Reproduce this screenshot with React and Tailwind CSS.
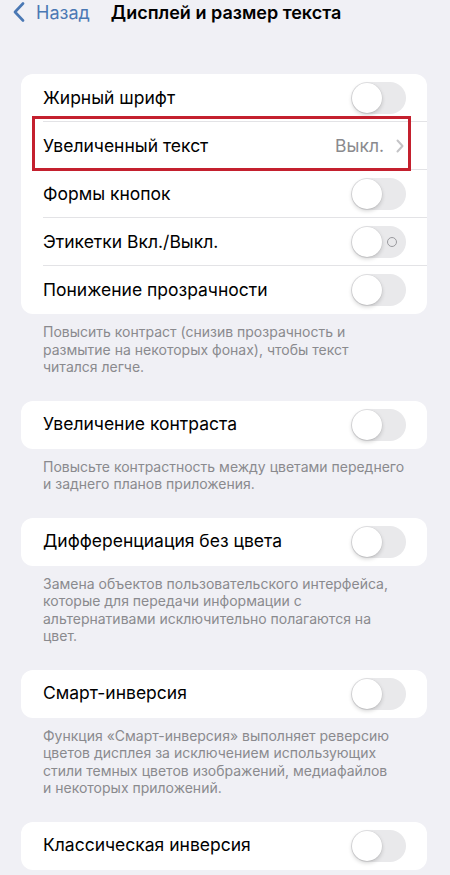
import React from "react";

function Toggle({ labels }) {
  return (
    <div className="relative w-[55px] h-[32px] rounded-full bg-[#e9e9eb] shrink-0">
      <div className="absolute left-[1px] top-[1px] w-[30px] h-[30px] rounded-full bg-white shadow-[0_2px_4px_rgba(0,0,0,0.18),0_0_0_0.5px_rgba(0,0,0,0.06)]" />
      {labels && (
        <div className="absolute right-[9px] top-[11px] w-[10px] h-[10px] rounded-full border-[1.5px] border-[#9a9a9e]" />
      )}
    </div>
  );
}

function Row({ title, last, children, highlight }) {
  return (
    <div className="relative h-[48px] flex items-center pl-[22px] pr-[21px]">
      <span className="flex-1 text-[17.5px] text-black">{title}</span>
      {children}
      {!last && (
        <div className="absolute left-[22px] right-0 bottom-0 h-px bg-[#e3e3e6]" />
      )}
      {highlight && (
        <div className="absolute left-[11px] right-[16px] top-[-6px] bottom-[-1px] border-[3px] border-[#c4202e]" />
      )}
    </div>
  );
}

function Note({ lines }) {
  return (
    <p className="mt-[9px] mb-[25px] pl-[43px] text-[14px] leading-[17.5px] text-[#8a8a8e] whitespace-nowrap">
      {lines.map((l, i) => (
        <React.Fragment key={i}>
          {l}
          {i < lines.length - 1 && <br />}
        </React.Fragment>
      ))}
    </p>
  );
}

function Card({ children }) {
  return (
    <div className="ml-[21px] w-[406px] bg-white rounded-[12px]">
      {children}
    </div>
  );
}

export default function App() {
  return (
    <div
      className="w-[450px] h-[875px] overflow-hidden bg-[#f0f0f5]"
      style={{ fontFamily: "Inter, 'Noto Sans', sans-serif" }}
    >
      <div className="h-[24px] flex items-center">
        <svg width="12" height="20" viewBox="0 0 12 20" className="ml-[13px]">
          <path
            d="M10 1.5 L2 10 L10 18.5"
            fill="none"
            stroke="#4a78b4"
            strokeWidth="2.6"
            strokeLinecap="round"
            strokeLinejoin="round"
          />
        </svg>
        <span className="ml-[11px] text-[18px] text-[#4a78b4]">Назад</span>
        <span className="ml-[21px] text-[18px] font-semibold text-black">
          Дисплей и размер текста
        </span>
      </div>

      <div className="h-[50px]" />

      <Card>
        <Row title="Жирный шрифт">
          <Toggle />
        </Row>
        <Row title="Увеличенный текст" highlight>
          <span className="text-[17.5px] text-[#8a8a8e]">Выкл.</span>
          <svg width="8" height="14" viewBox="0 0 8 14" className="ml-[12px] mr-[2px]">
            <path
              d="M1.5 1.5 L6.5 7 L1.5 12.5"
              fill="none"
              stroke="#c4c4c7"
              strokeWidth="2"
              strokeLinecap="round"
              strokeLinejoin="round"
            />
          </svg>
        </Row>
        <Row title="Формы кнопок">
          <Toggle />
        </Row>
        <Row title="Этикетки Вкл./Выкл.">
          <Toggle labels />
        </Row>
        <Row title="Понижение прозрачности" last>
          <Toggle />
        </Row>
      </Card>
      <Note
        lines={[
          "Повысить контраст (снизив прозрачность и",
          "размытие на некоторых фонах), чтобы текст",
          "читался легче.",
        ]}
      />

      <Card>
        <Row title="Увеличение контраста" last>
          <Toggle />
        </Row>
      </Card>
      <Note
        lines={[
          "Повысьте контрастность между цветами переднего",
          "и заднего планов приложения.",
        ]}
      />

      <Card>
        <Row title="Дифференциация без цвета" last>
          <Toggle />
        </Row>
      </Card>
      <Note
        lines={[
          "Замена объектов пользовательского интерфейса,",
          "которые для передачи информации с",
          "альтернативами исключительно полагаются на",
          "цвет.",
        ]}
      />

      <Card>
        <Row title="Смарт-инверсия" last>
          <Toggle />
        </Row>
      </Card>
      <Note
        lines={[
          "Функция «Смарт-инверсия» выполняет реверсию",
          "цветов дисплея за исключением использующих",
          "стили темных цветов изображений, медиафайлов",
          "и некоторых приложений.",
        ]}
      />

      <Card>
        <Row title="Классическая инверсия" last>
          <Toggle />
        </Row>
      </Card>
    </div>
  );
}
